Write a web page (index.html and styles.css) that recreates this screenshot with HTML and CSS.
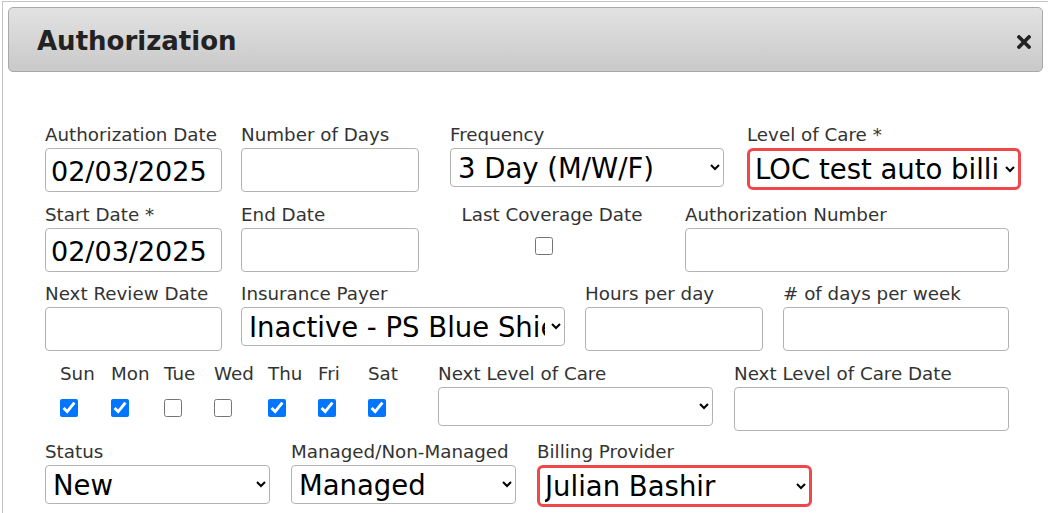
FILE: index.html
```html
<!DOCTYPE html>
<html lang="en">
<head>
    <meta charset="UTF-8">
    <title>Authorization</title>
    <link rel="stylesheet" href="styles.css">
</head>
<body>
    <div class="dialog">
        <div class="dialog-header">
            <span class="dialog-title">Authorization</span>
            <span class="dialog-close" title="Close">
                <svg width="14" height="14" viewBox="0 0 14 14">
                    <path d="M2 2 L12 12 M12 2 L2 12" stroke="#222" stroke-width="3.6" stroke-linecap="square"/>
                </svg>
            </span>
        </div>

        <div class="dialog-body">
            <!-- row 1 -->
            <div class="form-row row-1">
                <div class="field">
                    <label>Authorization Date</label>
                    <input type="text" class="text-input w-177" value="02/03/2025">
                </div>
                <div class="field">
                    <label>Number of Days</label>
                    <input type="text" class="text-input w-178">
                </div>
                <div class="field">
                    <label>Frequency</label>
                    <select class="select-input w-274">
                        <option>3 Day (M/W/F)</option>
                    </select>
                </div>
                <div class="field">
                    <label>Level of Care *</label>
                    <select class="select-input w-274 invalid">
                        <option>LOC test auto billing</option>
                    </select>
                </div>
            </div>

            <!-- row 2 -->
            <div class="form-row row-2">
                <div class="field">
                    <label>Start Date *</label>
                    <input type="text" class="text-input w-177" value="02/03/2025">
                </div>
                <div class="field">
                    <label>End Date</label>
                    <input type="text" class="text-input w-178">
                </div>
                <div class="field field-center">
                    <label>Last Coverage Date</label>
                    <input type="checkbox" class="check-input last-coverage">
                </div>
                <div class="field">
                    <label>Authorization Number</label>
                    <input type="text" class="text-input w-324">
                </div>
            </div>

            <!-- row 3 -->
            <div class="form-row row-3">
                <div class="field">
                    <label>Next Review Date</label>
                    <input type="text" class="text-input w-177">
                </div>
                <div class="field">
                    <label>Insurance Payer</label>
                    <select class="select-input w-324">
                        <option>Inactive - PS Blue Shield</option>
                    </select>
                </div>
                <div class="field">
                    <label>Hours per day</label>
                    <input type="text" class="text-input w-178">
                </div>
                <div class="field">
                    <label># of days per week</label>
                    <input type="text" class="text-input w-226">
                </div>
            </div>

            <!-- row 4 -->
            <div class="form-row row-4">
                <div class="days">
                    <div class="day day-sun"><label>Sun</label><input type="checkbox" class="check-input" checked></div>
                    <div class="day day-mon"><label>Mon</label><input type="checkbox" class="check-input" checked></div>
                    <div class="day day-tue"><label>Tue</label><input type="checkbox" class="check-input"></div>
                    <div class="day day-wed"><label>Wed</label><input type="checkbox" class="check-input"></div>
                    <div class="day day-thu"><label>Thu</label><input type="checkbox" class="check-input" checked></div>
                    <div class="day day-fri"><label>Fri</label><input type="checkbox" class="check-input" checked></div>
                    <div class="day day-sat"><label>Sat</label><input type="checkbox" class="check-input" checked></div>
                </div>
                <div class="field">
                    <label>Next Level of Care</label>
                    <select class="select-input w-275">
                        <option></option>
                    </select>
                </div>
                <div class="field">
                    <label>Next Level of Care Date</label>
                    <input type="text" class="text-input w-275">
                </div>
            </div>

            <!-- row 5 -->
            <div class="form-row row-5">
                <div class="field">
                    <label>Status</label>
                    <select class="select-input w-225">
                        <option>New</option>
                    </select>
                </div>
                <div class="field">
                    <label>Managed/Non-Managed</label>
                    <select class="select-input w-225">
                        <option>Managed</option>
                    </select>
                </div>
                <div class="field">
                    <label>Billing Provider</label>
                    <select class="select-input w-275 invalid">
                        <option>Julian Bashir</option>
                    </select>
                </div>
            </div>
        </div>
    </div>
</body>
</html>
```

FILE: styles.css
```css
html, body {
    margin: 0;
    height: 100%;
    background: #ffffff;
    overflow: hidden;
}
body {
    font-family: "DejaVu Sans", Verdana, sans-serif;
    color: #333;
}
.dialog {
    margin: 1px 0 0 2px;
    height: 100%;
    border: 1px solid #c4c4c4;
    border-right: none;
    border-bottom: none;
    box-sizing: border-box;
}
.dialog-header {
    display: flex;
    align-items: center;
    justify-content: space-between;
    height: 65px;
    margin: 5px 5px 0 5px;
    padding: 0 11px 0 28px;
    box-sizing: border-box;
    border: 1px solid #a8a8a8;
    border-radius: 5px;
    background: linear-gradient(#e2e2e2, #c9c9c9);
}
.dialog-title {
    font-size: 26px;
    font-weight: bold;
    color: #222;
    padding-top: 3px;
}
.dialog-close {
    display: flex;
    padding-top: 4px;
}
.dialog-body {
    padding: 52px 0 0 42px; /* first label sits well below the header */
}

/* rows */
.form-row {
    display: grid;
    align-items: start;
    margin-bottom: 12px;
}
.row-1 { grid-template-columns: 196px 209px 297px auto; }
.row-2 { grid-template-columns: 196px 220px 224px auto; margin-bottom: 11px; }
.row-3 { grid-template-columns: 196px 344px 198px auto; }
.row-4 { grid-template-columns: 393px 296px auto; margin-bottom: 10px; }
.row-5 { grid-template-columns: 246px 246px auto; }

.field {
    display: flex;
    flex-direction: column;
    align-items: flex-start;
}
.field-center {
    align-items: center;
    width: 182px;
}
label {
    font-size: 18.3px;
    line-height: 21px;
    margin-bottom: 3px;
    white-space: nowrap;
}

/* controls */
.text-input {
    height: 44px;
    box-sizing: border-box;
    border: 1px solid #b3b3b3;
    border-radius: 4px;
    padding: 2px 5px 0 5px;
    font-family: "DejaVu Sans", Verdana, sans-serif;
    font-size: 27px;
    color: #000;
    outline: none;
}
.select-input {
    height: 39px;
    box-sizing: border-box;
    border: 1px solid #b3b3b3;
    border-radius: 4px;
    padding: 0 3px;
    font-family: "DejaVu Sans", Verdana, sans-serif;
    font-size: 27.5px;
    color: #000;
    background-color: #fff;
}
.select-input.invalid {
    height: 42px;
    border: 3px solid #f0474b;
    border-radius: 6px;
    padding: 0 1px;
}
.w-177 { width: 177px; }
.w-178 { width: 178px; }
.w-225 { width: 225px; }
.w-226 { width: 226px; }
.w-274 { width: 274px; }
.w-275 { width: 275px; }
.w-324 { width: 324px; }

.check-input {
    width: 18px;
    height: 18px;
    margin: 0;
}
.last-coverage {
    margin-top: 9px;
    margin-right: 16px;
}

/* days of week */
.days {
    display: flex;
    padding-left: 15px;
}
.day {
    display: flex;
    flex-direction: column;
    align-items: flex-start;
}
.day label {
    margin-bottom: 15px;
}
.day-sun { width: 51px; }
.day-mon { width: 53px; }
.day-tue { width: 50px; }
.day-wed { width: 54px; }
.day-thu { width: 50px; }
.day-fri { width: 50px; }
.day-sat { width: 40px; }
```
